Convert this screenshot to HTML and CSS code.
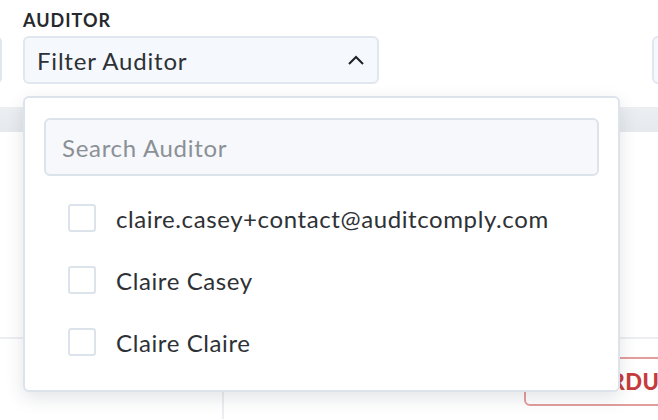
FILE: index.html
```html
<!DOCTYPE html>
<html>
<head>
<meta charset="utf-8">
<link rel="stylesheet" href="styles.css">
</head>
<body>
<div class="page">
  <div class="filters">
    <div class="filter filter-prev">
      <div class="label">&nbsp;</div>
      <div class="select"></div>
    </div>
    <div class="filter filter-main">
      <div class="label">AUDITOR</div>
      <div class="select open">
        <span class="select-text">Filter Auditor</span>
        <svg class="chev" width="18" height="12" viewBox="0 0 18 12"><path d="M2 10 L9 3 L16 10" fill="none" stroke="#1f2226" stroke-width="2"/></svg>
      </div>
      <div class="dropdown">
        <div class="search">Search Auditor</div>
        <ul class="options">
          <li class="option"><span class="box"></span><span>claire.casey+contact@auditcomply.com</span></li>
          <li class="option"><span class="box"></span><span>Claire Casey</span></li>
          <li class="option"><span class="box"></span><span>Claire Claire</span></li>
        </ul>
      </div>
    </div>
    <div class="filter filter-next">
      <div class="label">&nbsp;</div>
      <div class="select"></div>
    </div>
  </div>
  <div class="table">
    <div class="thead"></div>
    <div class="row row-first"></div>
    <div class="row row-second">
      <div class="cell c1"></div>
      <div class="cell c2"></div>
      <div class="cell c3"><span class="badge">OVERDUE</span></div>
    </div>
  </div>
</div>
</body>
</html>
```
FILE: styles.css
```css
* { box-sizing: border-box; }
html, body { margin: 0; padding: 0; background: #fff; }
body { font-family: Lato, "Open Sans", sans-serif; color: #2c2f33; overflow: hidden; width: 658px; height: 420px; }
.page { width: 658px; }
.filters { display: flex; gap: 21px; margin-left: -300px; padding-top: 10px; }
.filter { position: relative; flex: none; }
.filter-prev { width: 302px; }
.filter-main { width: 356px; }
.filter-next { width: 300px; margin-left: 252px; }
.label { font-size: 18px; font-weight: 700; line-height: 20px; height: 20px; margin-bottom: 6px; letter-spacing: 1px; color: #26292d; }
.select { height: 48px; border: 2px solid #e1e7ee; border-radius: 6px; background: #f5f9fd; display: flex; align-items: center; justify-content: space-between; padding: 0 12px 0 12px; }
.select-text { font-size: 24px; letter-spacing: 0.8px; color: #2e3135; }
.chev { display: block; }
.dropdown { position: absolute; top: 86px; left: 0; width: 597px; height: 296px; background: #fff; border: 2px solid #dde3eb; border-radius: 6px; box-shadow: 0 6px 18px rgba(40, 50, 70, 0.13); padding: 20px 19px 0 19px; z-index: 5; }
.search { height: 58px; border: 2px solid #dde3ea; border-radius: 6px; background: #f6f8fb; font-size: 24px; letter-spacing: 0.7px; color: #8b9096; display: flex; align-items: center; padding-left: 16px; }
.options { list-style: none; margin: 11px 0 0 0; padding: 0; }
.option { height: 62px; display: flex; align-items: center; gap: 20px; padding-left: 24px; font-size: 24px; color: #2e3135; letter-spacing: 0.6px; }
.box { width: 28px; height: 28px; border: 2px solid #dde3ea; border-radius: 3px; background: #fff; flex: none; }
.table { margin-top: 23px; }
.thead { height: 25px; background: linear-gradient(#eceff2, #e6e9ed); }
.row-first { height: 207px; border-bottom: 2px solid #eceef1; }
.row-second { display: flex; height: 80px; }
.cell { height: 100%; flex: none; }
.c1 { width: 224px; border-right: 2px solid #eceef1; }
.c2 { width: 300px; }
.c3 { flex: 1 1 auto; min-width: 0; overflow: hidden; padding-top: 18px; }
.badge { display: inline-block; width: 200px; height: 49px; border: 2px solid #e39d9d; border-radius: 6px; color: #c63c3c; font-weight: 900; font-size: 22px; line-height: 45px; padding-left: 38px; letter-spacing: 0.4px; white-space: nowrap; }
```
